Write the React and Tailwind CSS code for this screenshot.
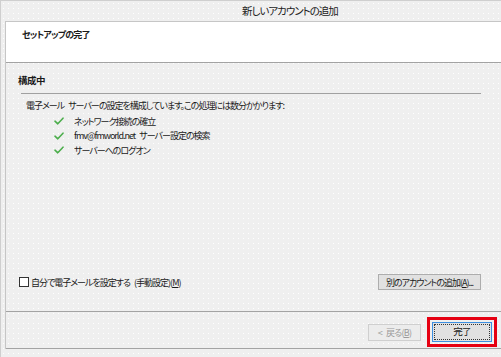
import React from 'react';

const dots = 'bg-[#efefef] bg-[radial-gradient(circle,#ffffff_0.7px,transparent_0.9px)] bg-[length:5px_5px]';

function Check() {
  return (
    <svg width="10" height="8" viewBox="0 0 10 8" className="shrink-0">
      <path d="M1 4.2 L3.8 6.8 L9 1.2" fill="none" stroke="#4cae4c" strokeWidth="1.6" strokeLinecap="round" strokeLinejoin="round" />
    </svg>
  );
}

const Sp = () => <span className="inline-block w-[4px]"></span>;

export default function App() {
  const steps = [
    <>ネットワーク接続の確立</>,
    <>fmv@fmworld.net<Sp />サーバー設定の検索</>,
    <>サーバーへのログオン</>,
  ];

  return (
    <div
      className={`w-[501px] h-[357px] overflow-hidden border-l border-t border-[#cfcfcf] text-[#1a1a1a] ${dots} [font-family:'Noto_Sans_CJK_JP','Noto_Sans',sans-serif] [font-feature-settings:'palt']`}
    >
      {/* Title bar */}
      <div className="h-[20px] pl-[241px] flex items-center text-[10.5px] tracking-[-1px] leading-none text-[#222]">
        新しいアカウントの追加
      </div>

      {/* Inner panel */}
      <div className="ml-[4px] border-l border-t border-[#c6c6c6]">
        {/* Header */}
        <div className="h-[41px] bg-white border-b border-[#a3a3a3] pl-[16px] pt-[6px]">
          <div className="text-[9px] tracking-[-0.8px] font-bold leading-[14px]">セットアップの完了</div>
        </div>

        {/* Content */}
        <div className="h-[249px] border-b border-[#a3a3a3] flex flex-col text-[9px] tracking-[-1px]">
          <div className="pl-[12px] pt-[10px] text-[9.5px] tracking-[-0.5px] font-bold leading-[14px]">構成中</div>
          <div className="ml-[15px] mr-[20px] mt-[6px] border-t border-[#a0a0a0]"></div>
          <div className="pl-[20px] pt-[5px] leading-[14px]">
            電子メール<Sp />サーバーの設定を構成しています。この処理には数分かかります:
          </div>
          <div className="flex flex-col pl-[48px] pt-[1px]">
            {steps.map((s, i) => (
              <div key={i} className="flex items-center h-[14.5px]">
                <Check />
                <span className="ml-[10px] leading-none">{s}</span>
              </div>
            ))}
          </div>

          <div className="flex-1"></div>

          <div className="flex items-center justify-between pl-[13px] pr-[20px] pb-[21px]">
            <label className="flex items-center leading-none whitespace-nowrap">
              <span className="w-[10px] h-[10px] border border-[#333] bg-white mr-[2px]"></span>
              自分で電子メールを設定する<Sp />(手動設定)(<span className="underline">M</span>)
            </label>
            <button className="w-[103px] h-[16px] border border-[#adadad] bg-[#e1e1e1] leading-none whitespace-nowrap flex items-center justify-center tracking-[-1px]">
              別のアカウントの追加(<span className="underline">A</span>)...
            </button>
          </div>
        </div>

        {/* Footer */}
        <div className="h-[37px] border-b border-[#a3a3a3] flex items-center justify-end pr-[4px] pt-[4px] text-[9px] tracking-[-0.8px]">
          <button className="w-[53px] h-[17px] border border-[#cfcfcf] bg-[#ececec] text-[#9a9a9a] leading-none whitespace-nowrap flex items-center justify-center mr-[6px]">
            &lt;<Sp />戻る(<span className="underline">B</span>)
          </button>
          <div className="border-[3px] border-[#e60012] p-[2px]">
            <button className="w-[60px] h-[20px] border border-[#3c8fe0] bg-[#e1e1e1] p-[1px] flex">
              <span className="flex-1 border border-dotted border-[#333] text-[9.5px] leading-none flex items-center justify-center">
                完了
              </span>
            </button>
          </div>
        </div>
      </div>
    </div>
  );
}
